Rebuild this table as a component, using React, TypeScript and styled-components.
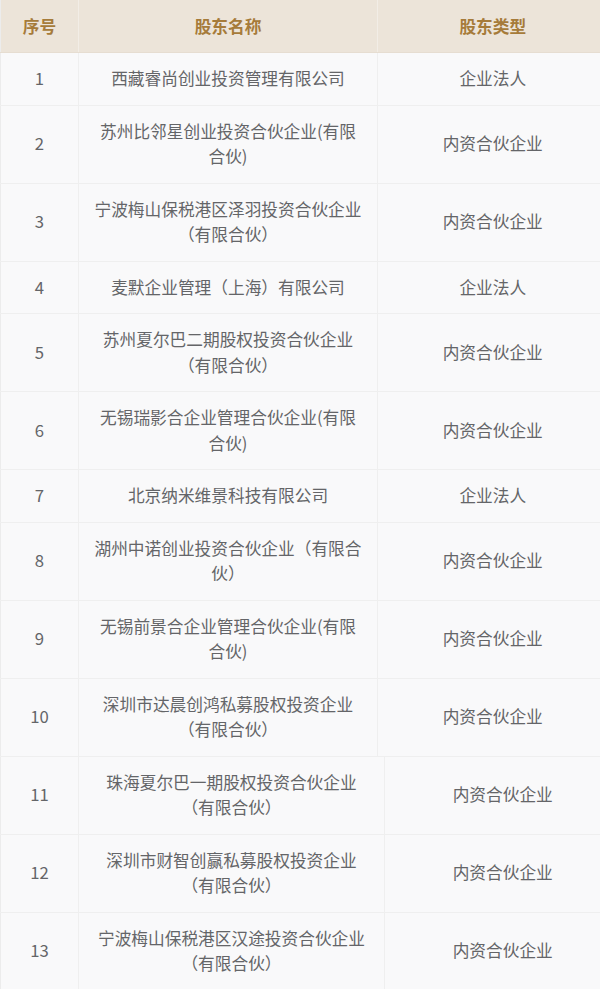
import styled, { createGlobalStyle } from "styled-components";

const GlobalStyle = createGlobalStyle`
  html, body {
    margin: 0;
    padding: 0;
    background: #ffffff;
  }
  body {
    font-family: "Noto Sans CJK SC", "Noto Sans", sans-serif;
  }
`;

const Page = styled.div`
  width: 600px;
  overflow: hidden;
  background: #f9f9fa;
`;

const Table = styled.table<{ $width: number }>`
  width: ${(props) => props.$width}px;
  table-layout: fixed;
  border-collapse: collapse;
  border-left: 1px solid #ececec;
  font-size: 16.7px;
  line-height: 25.5px;
  color: #646568;
`;

const HeadCell = styled.th`
  background: #ece4d9;
  color: #a67b3a;
  font-weight: 700;
  padding: 13.5px 14px;
  line-height: 25px;
  border-left: 1px solid #f2ede6;
  border-bottom: 1px solid #e6ddd1;
  text-align: center;
  &:first-child {
    border-left: none;
  }
`;

const Cell = styled.td`
  padding: 13px 14px;
  text-align: center;
  vertical-align: middle;
  border-left: 1px solid #efefef;
  border-bottom: 1px solid #efefef;
  background: #f9f9fa;
  &:first-child {
    border-left: none;
  }
`;

interface IHolder {
  no: number;
  name: string;
  type: string;
}

const upper: IHolder[] = [
  { no: 1, name: "西藏睿尚创业投资管理有限公司", type: "企业法人" },
  { no: 2, name: "苏州比邻星创业投资合伙企业(有限合伙)", type: "内资合伙企业" },
  { no: 3, name: "宁波梅山保税港区泽羽投资合伙企业（有限合伙）", type: "内资合伙企业" },
  { no: 4, name: "麦默企业管理（上海）有限公司", type: "企业法人" },
  { no: 5, name: "苏州夏尔巴二期股权投资合伙企业（有限合伙）", type: "内资合伙企业" },
  { no: 6, name: "无锡瑞影合企业管理合伙企业(有限合伙)", type: "内资合伙企业" },
  { no: 7, name: "北京纳米维景科技有限公司", type: "企业法人" },
  { no: 8, name: "湖州中诺创业投资合伙企业（有限合伙）", type: "内资合伙企业" },
  { no: 9, name: "无锡前景合企业管理合伙企业(有限合伙)", type: "内资合伙企业" },
  { no: 10, name: "深圳市达晨创鸿私募股权投资企业（有限合伙）", type: "内资合伙企业" },
];

const lower: IHolder[] = [
  { no: 11, name: "珠海夏尔巴一期股权投资合伙企业（有限合伙）", type: "内资合伙企业" },
  { no: 12, name: "深圳市财智创赢私募股权投资企业（有限合伙）", type: "内资合伙企业" },
  { no: 13, name: "宁波梅山保税港区汉途投资合伙企业（有限合伙）", type: "内资合伙企业" },
];

function HolderTable({
  rows,
  cols,
  showHead,
}: {
  rows: IHolder[];
  cols: number[];
  showHead?: boolean;
}) {
  const total = cols.reduce((a, b) => a + b, 0);
  return (
    <Table $width={total}>
      <colgroup>
        {cols.map((w, i) => (
          <col key={i} style={{ width: w }} />
        ))}
      </colgroup>
      {showHead && (
        <thead>
          <tr>
            <HeadCell>序号</HeadCell>
            <HeadCell>股东名称</HeadCell>
            <HeadCell>股东类型</HeadCell>
          </tr>
        </thead>
      )}
      <tbody>
        {rows.map((r) => (
          <tr key={r.no}>
            <Cell>{r.no}</Cell>
            <Cell>{r.name}</Cell>
            <Cell>{r.type}</Cell>
          </tr>
        ))}
      </tbody>
    </Table>
  );
}

export default function App() {
  return (
    <Page>
      <GlobalStyle />
      <HolderTable rows={upper} cols={[78, 299, 230]} showHead />
      <HolderTable rows={lower} cols={[78, 306, 236]} />
    </Page>
  );
}
